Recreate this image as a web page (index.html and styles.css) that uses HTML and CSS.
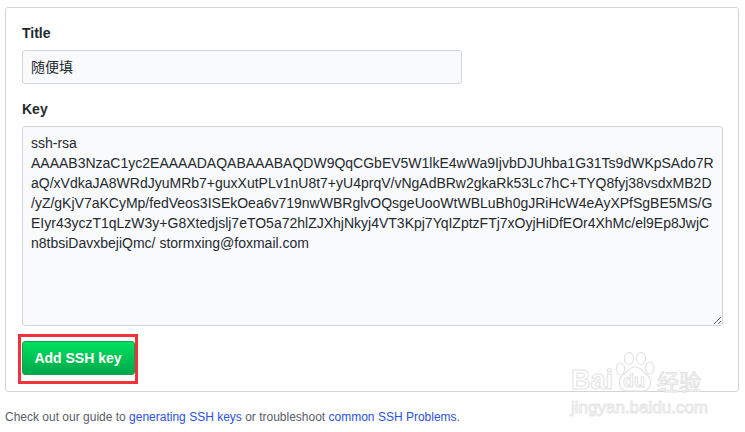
FILE: index.html
```html
<!DOCTYPE html>
<html lang="zh">
<head>
<meta charset="utf-8">
<title>Add SSH key</title>
<link rel="stylesheet" href="styles.css">
</head>
<body>
<form class="card">
  <label class="label" for="title">Title</label>
  <input class="title-input" id="title" value="随便填">
  <label class="label key-label" for="key">Key</label>
  <textarea class="key-input" id="key" spellcheck="false">ssh-rsa
AAAAB3NzaC1yc2EAAAADAQABAAABAQDW9QqCGbEV5W1lkE4wWa9IjvbDJUhba1G31Ts9dWKpSAdo7R
aQ/xVdkaJA8WRdJyuMRb7+guxXutPLv1nU8t7+yU4prqV/vNgAdBRw2gkaRk53Lc7hC+TYQ8fyj38vsdxMB2D
/yZ/gKjV7aKCyMp/fedVeos3ISEkOea6v719nwWBRglvOQsgeUooWtWBLuBh0gJRiHcW4eAyXPfSgBE5MS/G
EIyr43yczT1qLzW3y+G8Xtedjslj7eTO5a72hlZJXhjNkyj4VT3Kpj7YqIZptzFTj7xOyjHiDfEOr4XhMc/el9Ep8JwjC
n8tbsiDavxbejiQmc/ stormxing@foxmail.com</textarea>
  <div class="highlight"><button class="submit" type="button">Add SSH key</button></div>
</form>
<p class="help">Check out our guide to <a href="#">generating SSH keys</a> or troubleshoot <a href="#">common SSH Problems</a>.</p>
<div class="watermark" aria-hidden="true">
  <div class="wm-top">
    <span class="wm-bai">Bai</span>
    <span class="wm-paw">
      <svg viewBox="0 0 40 40" width="40" height="40"><g fill="#fff" stroke="#e3e3e3" stroke-width="1.2"><ellipse cx="5.5" cy="17" rx="4.2" ry="6"/><ellipse cx="14" cy="6.5" rx="4.6" ry="6"/><ellipse cx="26" cy="6.5" rx="4.6" ry="6"/><ellipse cx="34.5" cy="16" rx="4.2" ry="6"/><path d="M20 15c-6 0-8 5-12 8-6 5-4 16 4 16h16c8 0 10-11 4-16-4-3-6-8-12-8z"/></g></svg>
      <span class="wm-du">du</span>
    </span>
    <span class="wm-cn">经验</span>
  </div>
  <div class="wm-url">jingyan.baidu.com</div>
</div>
</body>
</html>
```
FILE: styles.css
```css
html, body { margin: 0; padding: 0; background: #fff; }
body {
  position: relative;
  width: 745px;
  height: 432px;
  overflow: hidden;
  padding: 7px 6px 0 5px;
  box-sizing: border-box;
  font-family: "Liberation Sans", Arial, "Noto Sans CJK SC", sans-serif;
  font-size: 14px;
  color: #24292e;
}
.card {
  display: flex;
  flex-direction: column;
  align-items: flex-start;
  box-sizing: border-box;
  height: 385px;
  padding: 15px 16px 0;
  border: 1px solid #d1d5da;
  border-radius: 3px;
}
.label { font-weight: 700; line-height: 20px; height: 20px; margin-bottom: 7px; }
.key-label { margin-top: 15px; margin-bottom: 7px; }
.title-input, .key-input {
  box-sizing: border-box;
  font: inherit;
  font-family: "Liberation Sans", "Noto Sans CJK SC", sans-serif;
  color: #24292e;
  background: #f9fafc;
  border: 1px solid #d1d5da;
  border-radius: 3px;
  outline: none;
  margin: 0;
}
.title-input { width: 440px; height: 34px; padding: 5px 8px 7px; }
.key-input {
  display: block;
  width: 701px;
  height: 200px;
  padding: 6px 8px;
  line-height: 20px;
  white-space: pre-wrap;
  overflow: hidden;
}
.highlight {
  box-sizing: border-box;
  width: 120px;
  height: 50px;
  margin: 8px 0 0 -4px;
  padding: 4px 0 0 1px;
  border: 3px solid #f0323a;
}
.submit {
  display: block;
  box-sizing: border-box;
  width: 113px;
  height: 34px;
  padding: 0 1px 0 0;
  font: 700 14px "Liberation Sans", Arial, sans-serif;
  color: #fff;
  background: linear-gradient(#00e060, #00a84a);
  border: 1px solid #10a050;
  border-radius: 3px;
}
.help { margin: 16px 0 0; font-size: 12px; line-height: 18px; color: #586069; }
.help a { color: #2b50e0; text-decoration: none; }
.watermark {
  position: absolute;
  left: 571px;
  top: 352px;
  width: 134px;
  pointer-events: none;
}
.wm-top { display: flex; align-items: flex-end; height: 40px; }
.wm-bai {
  width: 44px;
  font-size: 27px;
  font-weight: 700;
  line-height: 24px;
  color: #fff;
  -webkit-text-stroke: 1px #e3e3e3;
}
.wm-paw { position: relative; display: block; width: 40px; height: 40px; }
.wm-paw svg { display: block; }
.wm-du {
  position: absolute;
  left: 8px;
  bottom: 0;
  font-size: 18px;
  font-weight: 700;
  line-height: 22px;
  color: #fff;
  -webkit-text-stroke: 1px #e3e3e3;
}
.wm-cn {
  margin-left: 2px;
  font-family: "Noto Sans CJK SC", sans-serif;
  font-size: 22px;
  line-height: 24px;
  white-space: nowrap;
  color: #fff;
  -webkit-text-stroke: 1px #e3e3e3;
}
.wm-url {
  margin-top: 6px;
  font-size: 17px;
  line-height: 20px;
  white-space: nowrap;
  color: #fff;
  -webkit-text-stroke: 1px #e6e6e6;
}
```
